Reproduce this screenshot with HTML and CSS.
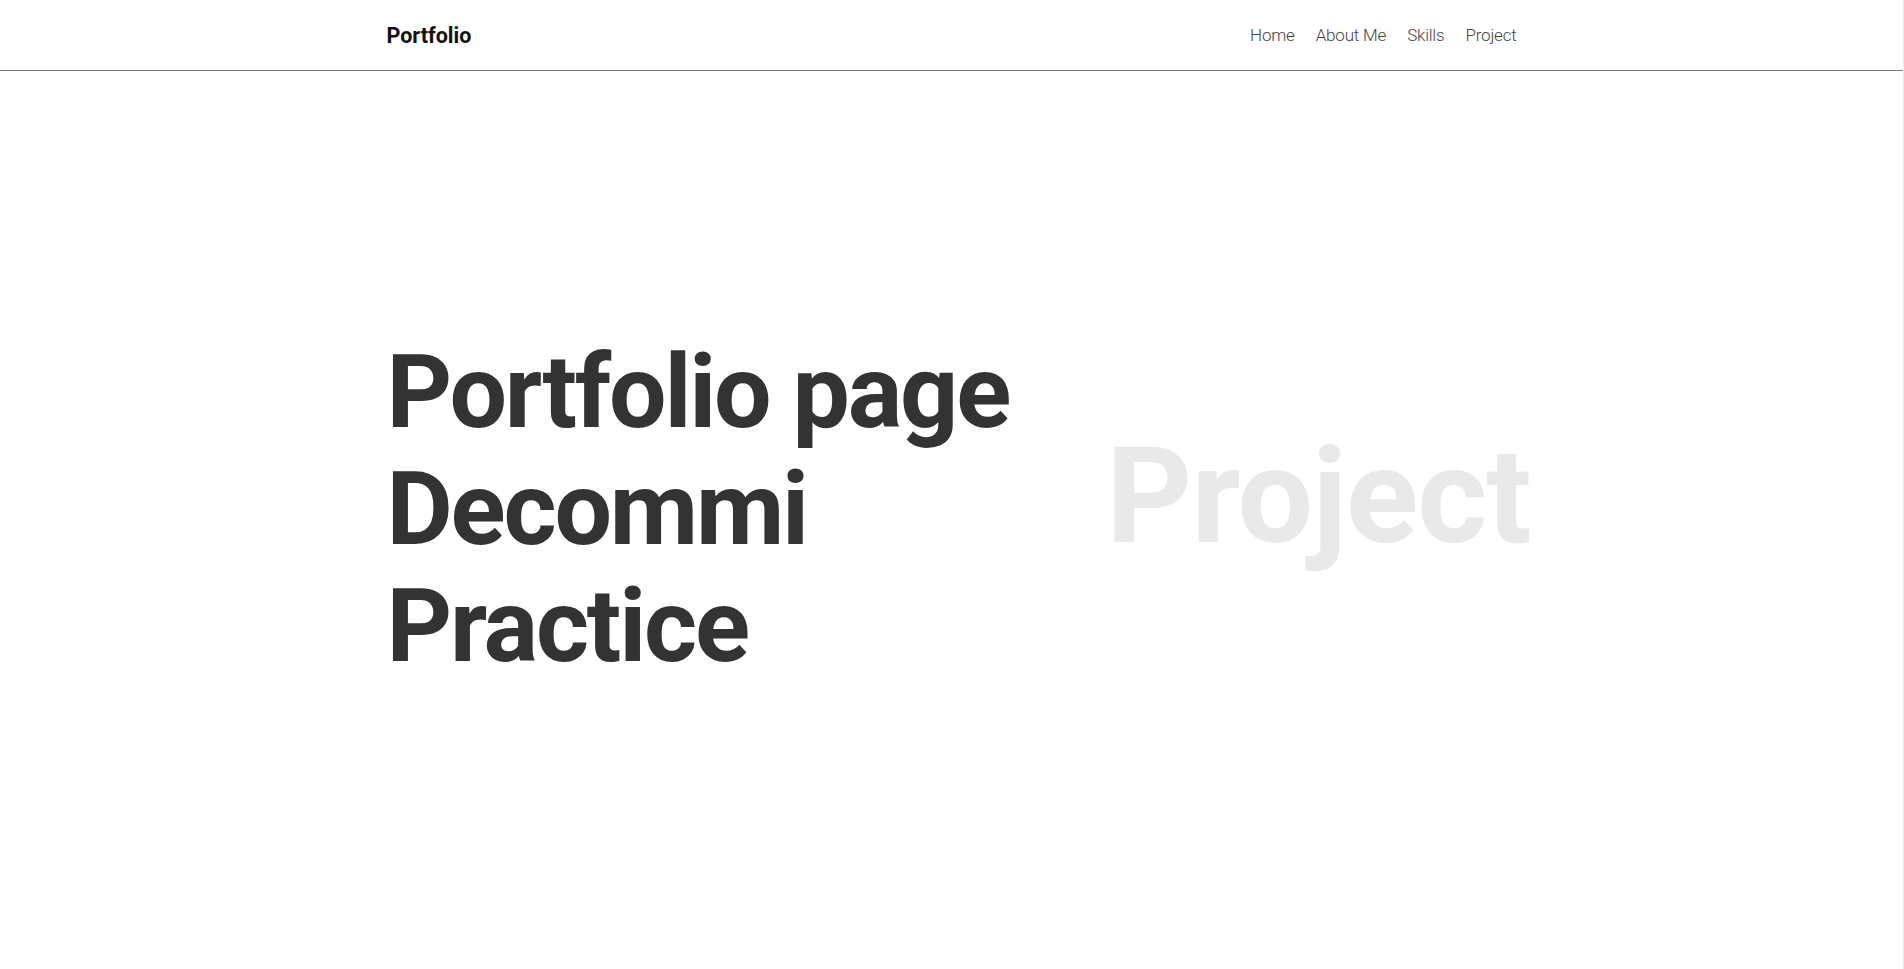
FILE: index.html
```html
<!DOCTYPE html>
<html lang="en">
<head>
<meta charset="utf-8">
<title>Portfolio</title>
<link rel="stylesheet" href="styles.css">
</head>
<body>
<div class="page">
  <header class="site-header">
    <div class="container header-inner">
      <a class="logo" href="#">Portfolio</a>
      <nav class="nav">
        <a href="#">Home</a>
        <a href="#">About Me</a>
        <a href="#">Skills</a>
        <a href="#">Project</a>
      </nav>
    </div>
  </header>
  <main class="hero">
    <div class="container hero-inner">
      <h1 class="hero-title">Portfolio page<br>Decommi<br>Practice</h1>
      <div class="hero-ghost">Project</div>
    </div>
  </main>
</div>
</body>
</html>
```

FILE: styles.css
```css
* { box-sizing: border-box; }
html, body { margin: 0; padding: 0; height: 100%; }
body {
  font-family: Roboto, "Liberation Sans", sans-serif;
  background: #fff;
  color: #333;
}
.page {
  min-height: 100vh;
  display: flex;
  flex-direction: column;
  border-right: 1px solid #ebebeb;
}
.container {
  width: 1130px;
  margin: 0 auto;
}
.site-header {
  height: 71px;
  border-bottom: 1px solid #7a7a7a;
}
.header-inner {
  height: 70px;
  display: flex;
  align-items: center;
  justify-content: space-between;
}
.logo {
  font-size: 21.5px;
  font-weight: 700;
  color: #111;
  text-decoration: none;
  letter-spacing: 0;
}
.nav {
  display: flex;
  gap: 21px;
}
.nav a {
  font-size: 17px;
  font-weight: 300;
  color: #444;
  text-decoration: none;
  letter-spacing: -0.2px;
}
.hero {
  flex: 1;
  display: flex;
  align-items: center;
  padding-bottom: 22px;
}
.hero-inner {
  display: flex;
  align-items: center;
  justify-content: space-between;
}
.hero-title {
  margin: 0;
  font-size: 102px;
  line-height: 117px;
  font-weight: 700;
  color: #333;
  letter-spacing: -2.2px;
}
.hero-ghost {
  font-size: 134px;
  font-weight: 700;
  color: #e9e9e9;
  letter-spacing: -1px;
  margin-right: -14px;
  margin-bottom: 26px;
}
```
